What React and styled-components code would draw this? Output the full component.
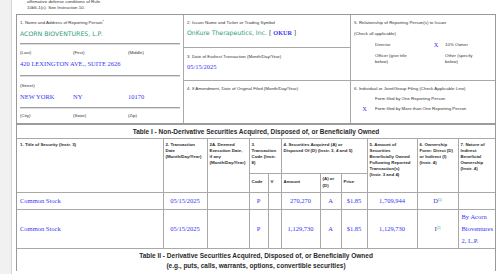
import React from "react";
import styled, { createGlobalStyle } from "styled-components";

const BLUE = "#3636f4";
const TEAL = "#2f9c7c";
const GREEN = "#4a9e4a";
const LINE = "#a9a9a9";

const GlobalStyle = createGlobalStyle`
  *, *::before, *::after { box-sizing: border-box; }
  html, body { margin: 0; padding: 0; background: #fff; }
  body { font-family: "Liberation Sans", Arial, sans-serif; color: #2a2a2a; }
`;

const Page = styled.div`
  display: flex;
  min-height: 274px;
  overflow: hidden;
`;

const SideStrip = styled.div`
  width: 12px;
  flex: none;
  background: #f1f1f1;
  border-right: 1px solid #d6d6d6;
`;

const Content = styled.div`
  margin-left: 4px;
  width: 480px;
  flex: none;
`;

const Note = styled.div`
  height: 14px;
  padding-left: 11px;
  overflow: hidden;
`;

const NoteText = styled.div`
  margin-top: -1px;
  font-size: 4.4px;
  line-height: 6px;
  color: #333;
`;

const Form = styled.div`
  border: 1px solid #999;
  border-bottom: none;
`;

const TopGrid = styled.div`
  display: grid;
  grid-template-columns: 167px 167px 1fr;
  height: 110px;
  border-bottom: 2px solid #9c9c9c;
`;

const Box = styled.div`
  padding-left: ${(p) => (p.$flush ? 0 : 3)}px;
  border-right: ${(p) => (p.$last ? "none" : `1px solid ${LINE}`)};
  display: flex;
  flex-direction: column;
`;

const Section = styled.div`
  padding-left: 3px;
  height: ${(p) => (p.$h ? `${p.$h}px` : "auto")};
  flex: ${(p) => (p.$h ? "none" : "1")};
  border-bottom: ${(p) => (p.$divider ? `1px solid ${LINE}` : "none")};
`;

const Label = styled.div`
  font-size: 4.4px;
  line-height: 6px;
  height: 6px;
  color: #333;
  white-space: nowrap;
  margin-top: ${(p) => p.$mt || 0}px;
`;

const Star = styled.sup`
  font-size: 3.4px;
  vertical-align: 1.5px;
  line-height: 0;
`;

const Entity = styled.div`
  font-family: "DejaVu Sans", "Liberation Sans", sans-serif;
  font-size: 6.2px;
  line-height: 8px;
  height: 8px;
  color: ${TEAL};
  white-space: nowrap;
  margin-top: ${(p) => p.$mt || 0}px;
`;

const Bracket = styled.span`
  color: #333;
`;

const Ticker = styled.span`
  font-family: "Liberation Serif", "Times New Roman", serif;
  font-size: 6.2px;
  font-weight: bold;
  color: ${BLUE};
`;

const Data = styled.div`
  font-family: "Liberation Serif", "Times New Roman", serif;
  font-size: 6.5px;
  line-height: 8px;
  height: 8px;
  color: ${BLUE};
  white-space: nowrap;
  margin-top: ${(p) => p.$mt || 0}px;
`;

const Triple = styled.div`
  display: grid;
  grid-template-columns: 53px 55px 1fr;
  margin-top: ${(p) => p.$mt || 0}px;
`;

const Rule = styled.div`
  margin-top: ${(p) => p.$mt || 0}px;
  margin-right: 3px;
  border-top: 1px solid #a0a0a0;
  border-bottom: 1px solid #dedede;
`;

const CheckGrid = styled.div`
  display: grid;
  grid-template-columns: ${(p) => p.$cols};
  row-gap: ${(p) => p.$gap}px;
  margin-top: ${(p) => p.$mt || 0}px;
  font-size: 4.4px;
  line-height: 5.7px;
  color: #333;
  white-space: nowrap;
`;

const Mark = styled.span`
  font-family: "Liberation Serif", "Times New Roman", serif;
  font-size: 6.4px;
  line-height: 5.7px;
  color: ${BLUE};
  text-align: center;
`;

const TableTitle = styled.div`
  font-weight: bold;
  font-size: 6.5px;
  color: #2a2a2a;
  text-align: center;
  white-space: nowrap;
  line-height: ${(p) => p.$lh}px;
  padding-top: ${(p) => p.$pt || 0}px;
  height: ${(p) => (p.$h ? `${p.$h}px` : "auto")};
  border-top: ${(p) => (p.$top ? `1px solid ${LINE}` : "none")};
  border-bottom: ${(p) => (p.$bottom ? `1px solid ${LINE}` : "none")};
`;

const Table = styled.table`
  width: 100%;
  border-collapse: collapse;
  border-style: hidden;
  table-layout: fixed;
`;

const Row = styled.tr`
  height: ${(p) => p.$h}px;
`;

const Head = styled.th`
  border: 1px solid ${LINE};
  padding: ${(p) => (p.$mid ? "0 2px" : `3px 2px 0 ${p.$pl || 2}px`)};
  font-size: 4.4px;
  line-height: 6.1px;
  font-weight: bold;
  text-align: left;
  vertical-align: ${(p) => (p.$mid ? "middle" : "top")};
  color: #2a2a2a;
  white-space: nowrap;
  overflow: hidden;
`;

const Cell = styled.td`
  border: 1px solid ${LINE};
  padding: 0 ${(p) => (p.$align === "left" ? "3px" : "0")};
  font-family: "Liberation Serif", "Times New Roman", serif;
  font-size: 6.5px;
  line-height: ${(p) => p.$lh || 8}px;
  color: ${BLUE};
  text-align: ${(p) => p.$align || "center"};
  vertical-align: middle;
  white-space: nowrap;
`;

const Foot = styled.sup`
  font-family: "Liberation Sans", Arial, sans-serif;
  font-size: 3.3px;
  color: ${GREEN};
  vertical-align: 1.8px;
  line-height: 0;
`;

const widths = [146, 44, 42, 19, 13, 39, 21, 26, 50, 41, 37];

const rows = [
  {
    title: "Common Stock",
    date: "05/15/2025",
    code: "P",
    amount: "270,270",
    ad: "A",
    price: "$1.85",
    owned: "1,709,944",
    form: "D",
    note: "(1)",
    nature: null,
    h: 17,
  },
  {
    title: "Common Stock",
    date: "05/15/2025",
    code: "P",
    amount: "1,129,730",
    ad: "A",
    price: "$1.85",
    owned: "1,129,730",
    form: "I",
    note: "(2)",
    nature: ["By Acorn", "Bioventures", "2, L.P."],
    h: 39,
  },
];

export default function App() {
  return (
    <>
      <GlobalStyle />
      <Page>
        <SideStrip />
        <Content>
          <Note>
            <NoteText>
              affirmative defense conditions of Rule
              <br />
              10b5-1(c). See Instruction 10.
            </NoteText>
          </Note>
          <Form>
            <TopGrid>
              <Box>
                <Label $mt={5}>
                  1. Name and Address of Reporting Person<Star>*</Star>
                </Label>
                <Entity $mt={4}>ACORN BIOVENTURES, L.P.</Entity>
                <Rule $mt={5} />
                <Triple $mt={4.7}>
                  <Label>(Last)</Label>
                  <Label>(First)</Label>
                  <Label>(Middle)</Label>
                </Triple>
                <Data $mt={4.3}>420 LEXINGTON AVE., SUITE 2626</Data>
                <Rule $mt={7} />
                <Label $mt={6}>(Street)</Label>
                <Triple $mt={4}>
                  <Data>NEW YORK</Data>
                  <Data>NY</Data>
                  <Data>10170</Data>
                </Triple>
                <Rule $mt={6.5} />
                <Triple $mt={3.5}>
                  <Label>(City)</Label>
                  <Label>(State)</Label>
                  <Label>(Zip)</Label>
                </Triple>
              </Box>

              <Box $flush>
                <Section $h={33} $divider>
                  <Label $mt={5}>2. Issuer Name and Ticker or Trading Symbol</Label>
                  <Entity $mt={3}>
                    OnKure Therapeutics, Inc. <Bracket>[</Bracket> <Ticker>OKUR</Ticker>{" "}
                    <Bracket>]</Bracket>
                  </Entity>
                </Section>
                <Section $h={33} $divider>
                  <Label $mt={5.7}>3. Date of Earliest Transaction (Month/Day/Year)</Label>
                  <Data $mt={3}>05/15/2025</Data>
                </Section>
                <Section>
                  <Label $mt={5.3}>4. If Amendment, Date of Original Filed (Month/Day/Year)</Label>
                </Section>
              </Box>

              <Box $flush $last>
                <Section $h={66} $divider>
                  <Label $mt={5}>5. Relationship of Reporting Person(s) to Issuer</Label>
                  <Label $mt={5}>(Check all applicable)</Label>
                  <CheckGrid $cols="21px 52px 18px 1fr" $gap={5.4} $mt={5}>
                    <Mark />
                    <span>Director</span>
                    <Mark>X</Mark>
                    <span>10% Owner</span>
                    <Mark />
                    <span>
                      Officer (give title
                      <br />
                      below)
                    </span>
                    <Mark />
                    <span>
                      Other (specify
                      <br />
                      below)
                    </span>
                  </CheckGrid>
                </Section>
                <Section>
                  <Label $mt={5.3}>6. Individual or Joint/Group Filing (Check Applicable Line)</Label>
                  <CheckGrid $cols="21px 1fr" $gap={4.8} $mt={3.3}>
                    <Mark />
                    <span>Form filed by One Reporting Person</span>
                    <Mark>X</Mark>
                    <span>Form filed by More than One Reporting Person</span>
                  </CheckGrid>
                </Section>
              </Box>
            </TopGrid>

            <TableTitle $h={14} $lh={13} $bottom>
              Table I - Non-Derivative Securities Acquired, Disposed of, or Beneficially Owned
            </TableTitle>

            <Table>
              <colgroup>
                {widths.map((w, i) => (
                  <col key={i} style={{ width: `${w}px` }} />
                ))}
              </colgroup>
              <thead>
                <Row $h={34}>
                  <Head rowSpan={2} $pl={3}>
                    1. Title of Security (Instr. 3)
                  </Head>
                  <Head rowSpan={2}>
                    2. Transaction
                    <br />
                    Date
                    <br />
                    (Month/Day/Year)
                  </Head>
                  <Head rowSpan={2}>
                    2A. Deemed
                    <br />
                    Execution Date,
                    <br />
                    if any
                    <br />
                    (Month/Day/Year)
                  </Head>
                  <Head colSpan={2}>
                    3.
                    <br />
                    Transaction
                    <br />
                    Code (Instr.
                    <br />
                    8)
                  </Head>
                  <Head colSpan={3}>
                    4. Securities Acquired (A) or
                    <br />
                    Disposed Of (D) (Instr. 3, 4 and 5)
                  </Head>
                  <Head rowSpan={2}>
                    5. Amount of
                    <br />
                    Securities
                    <br />
                    Beneficially Owned
                    <br />
                    Following Reported
                    <br />
                    Transaction(s)
                    <br />
                    (Instr. 3 and 4)
                  </Head>
                  <Head rowSpan={2}>
                    6. Ownership
                    <br />
                    Form: Direct (D)
                    <br />
                    or Indirect (I)
                    <br />
                    (Instr. 4)
                  </Head>
                  <Head rowSpan={2}>
                    7. Nature of
                    <br />
                    Indirect
                    <br />
                    Beneficial
                    <br />
                    Ownership
                    <br />
                    (Instr. 4)
                  </Head>
                </Row>
                <Row $h={19}>
                  <Head $mid>Code</Head>
                  <Head $mid>V</Head>
                  <Head $mid>Amount</Head>
                  <Head $mid>
                    (A) or
                    <br />
                    (D)
                  </Head>
                  <Head $mid>Price</Head>
                </Row>
              </thead>
              <tbody>
                {rows.map((r, i) => (
                  <Row key={i} $h={r.h}>
                    <Cell $align="left">{r.title}</Cell>
                    <Cell>{r.date}</Cell>
                    <Cell />
                    <Cell>{r.code}</Cell>
                    <Cell />
                    <Cell>{r.amount}</Cell>
                    <Cell>{r.ad}</Cell>
                    <Cell>{r.price}</Cell>
                    <Cell>{r.owned}</Cell>
                    <Cell>
                      {r.form}
                      <Foot>{r.note}</Foot>
                    </Cell>
                    <Cell $align="left" $lh={11.7}>
                      {r.nature &&
                        r.nature.map((line, j) => (
                          <React.Fragment key={j}>
                            {j > 0 && <br />}
                            {line}
                          </React.Fragment>
                        ))}
                    </Cell>
                  </Row>
                ))}
              </tbody>
            </Table>

            <TableTitle $lh={10} $pt={2} $top>
              Table II - Derivative Securities Acquired, Disposed of, or Beneficially Owned
              <br />
              (e.g., puts, calls, warrants, options, convertible securities)
            </TableTitle>
          </Form>
        </Content>
      </Page>
    </>
  );
}
